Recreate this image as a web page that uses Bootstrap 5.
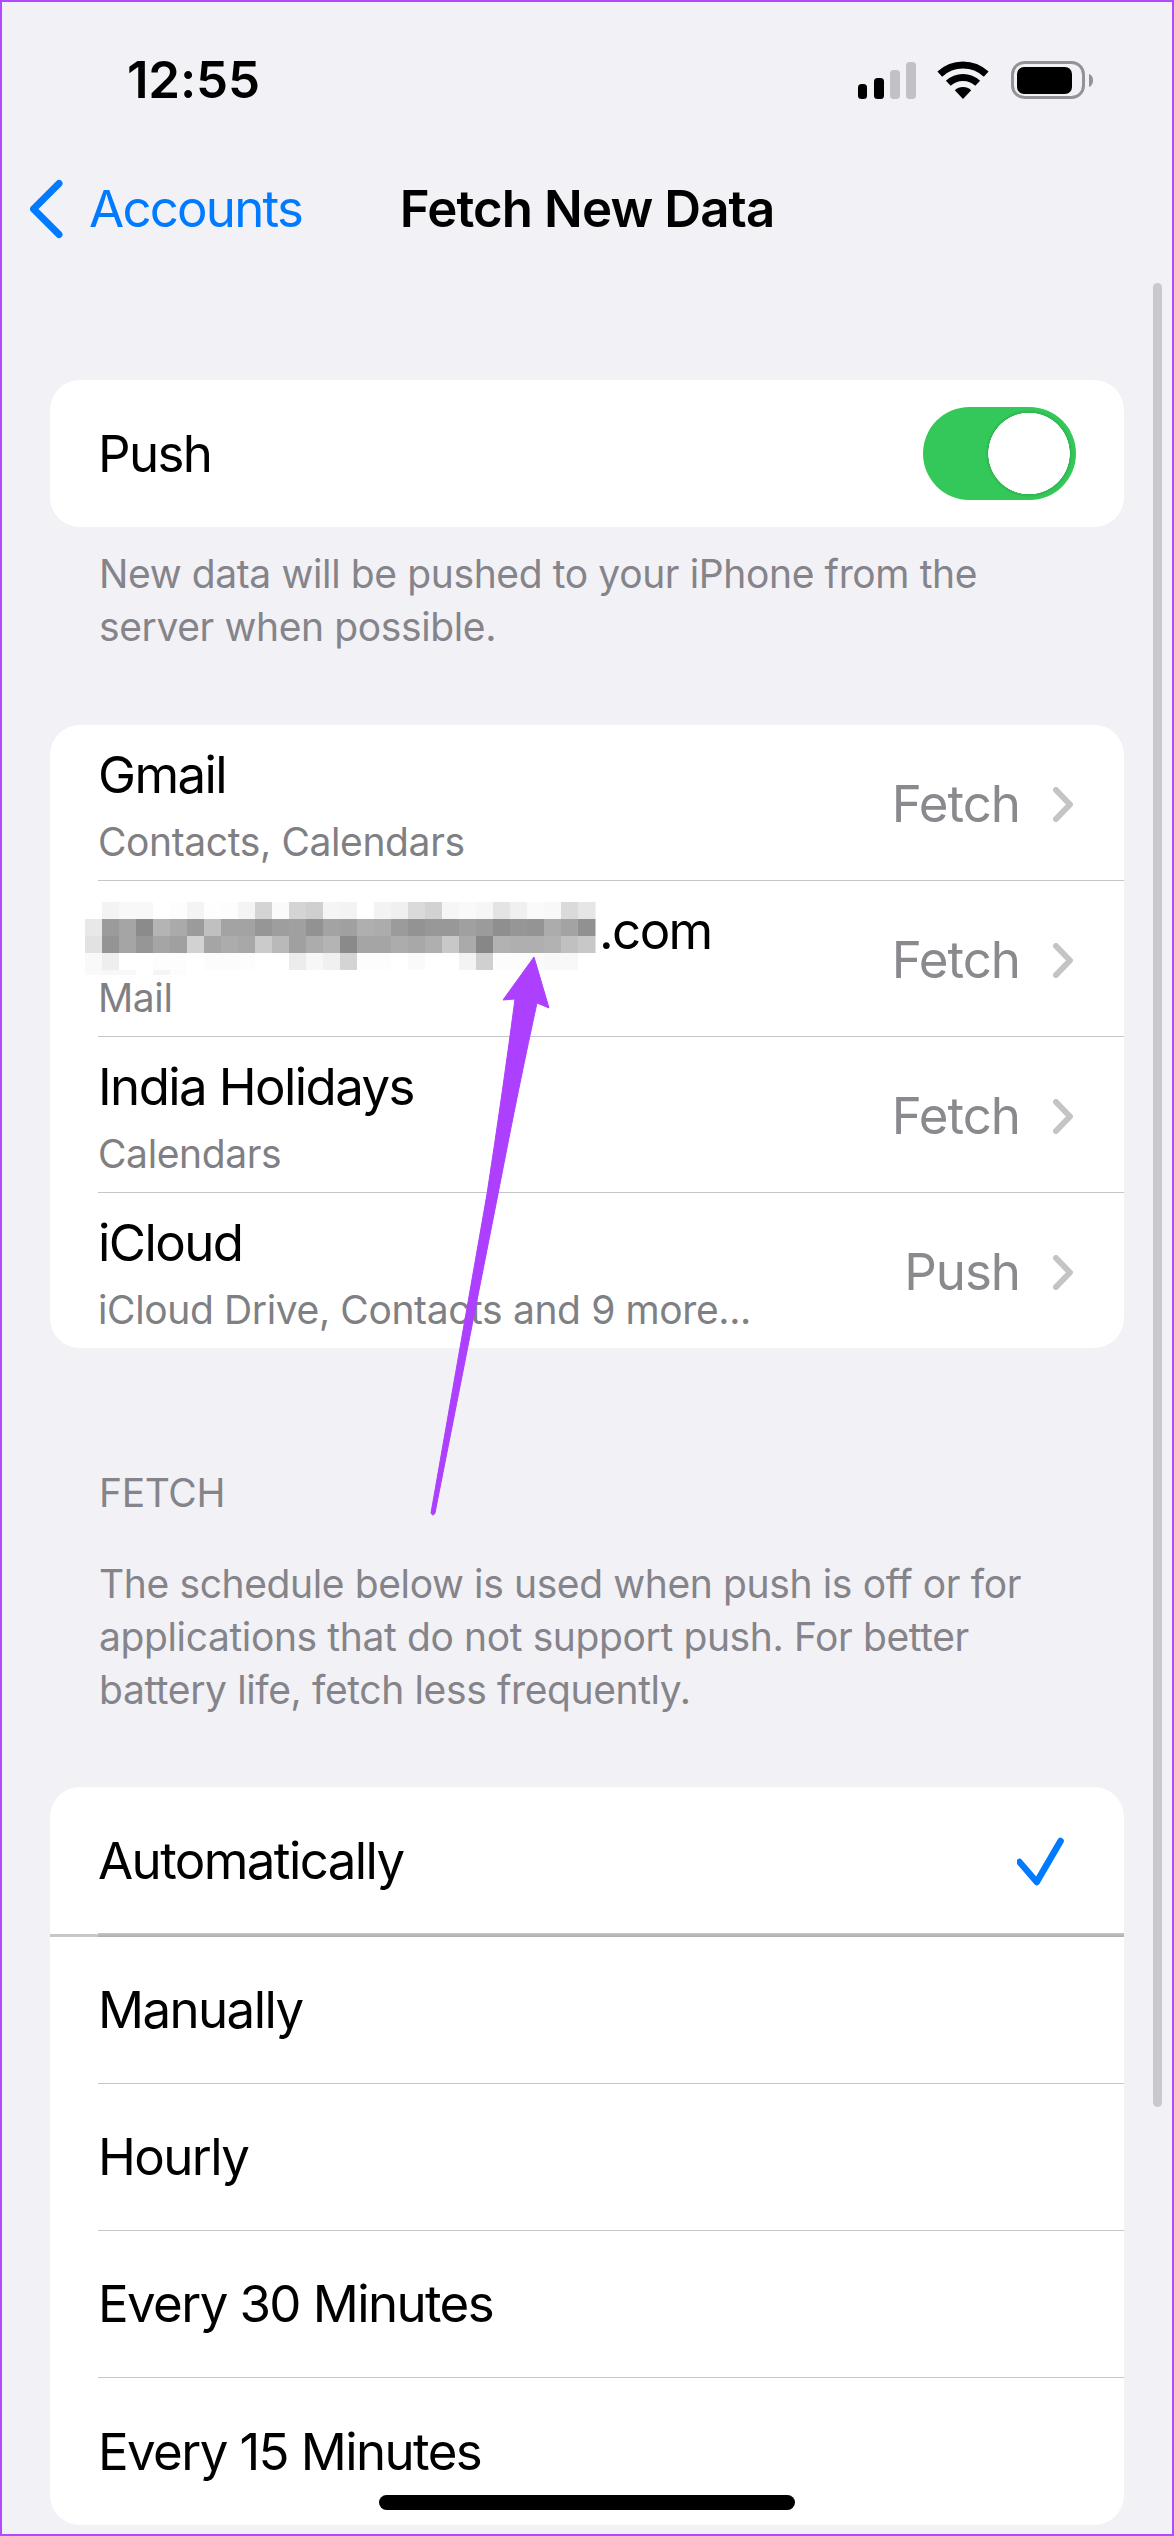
<!DOCTYPE html>
<html lang="en">
<head>
    <meta charset="UTF-8">
    <meta name="viewport" content="width=device-width, initial-scale=1.0">
    <title>Fetch New Data</title>
    <link href="https://cdn.jsdelivr.net/npm/bootstrap@5.3.0/dist/css/bootstrap.min.css" rel="stylesheet">
    <style>
        body {
            margin: 0;
            background: #f2f1f6;
            font-family: Inter, "Liberation Sans", sans-serif;
            color: #000;
        }

        .phone-frame {
            position: relative;
            height: 100vh;
            overflow: hidden;
            background: #f2f1f6;
            border: 2px solid #b04bff;
        }

        /* status bar */
        .status-strip {
            padding: 47px 79px 0 125px;
        }

        .clock-text {
            font-size: 51px;
            line-height: 62px;
            font-weight: 600;
            letter-spacing: -0.2px;
        }

        /* nav bar */
        .nav-strip {
            display: grid;
            grid-template-columns: 1fr auto 1fr;
            align-items: center;
            margin-top: 67px;
        }

        .back-link {
            gap: 25px;
            padding-left: 28px;
            color: #007aff;
            text-decoration: none;
            font-size: 51px;
            line-height: 62px;
            letter-spacing: -1.8px;
        }

        .nav-title {
            font-size: 51px;
            line-height: 62px;
            font-weight: 600;
            letter-spacing: -0.9px;
        }

        /* grouped lists */
        .ios-group {
            margin: 0 48px;
            border-radius: 30px;
            background: #fff;
        }

        .ios-item {
            position: relative;
            padding: 0;
            border: 0;
            background: transparent;
            color: #000;
        }

        .item-label {
            font-size: 51px;
            line-height: 62px;
            letter-spacing: -1.6px;
        }

        .push-group {
            margin-top: 140px;
        }

        .single-line {
            height: 147px;
            padding: 0 48px;
        }

        .form-switch .push-toggle.form-check-input,
        .form-switch .push-toggle.form-check-input:checked {
            --bs-form-switch-bg: radial-gradient(circle at 106px 46.5px, #fff 40.5px, #2fb650 41px, transparent 44px);
            width: 153px;
            height: 93px;
            margin: 0;
            float: none;
            border: 0;
            border-radius: 47px;
            background-color: #34c759;
        }

        .group-note {
            margin: 20px 48px 0 97px;
            font-size: 39px;
            line-height: 53px;
            letter-spacing: -0.38px;
            color: #85848a;
            white-space: nowrap;
        }

        .accounts-group {
            margin-top: 72px;
        }

        .account-item {
            margin-left: 48px;
            height: 156px;
            padding: 19px 51px 0 0;
            border-bottom: 1px solid #c6c6c8;
        }

        .ios-item:last-child .account-item {
            border-bottom: 0;
            height: 155px;
        }

        .account-sub {
            margin-top: 12px;
            font-size: 39px;
            line-height: 47px;
            letter-spacing: -0.38px;
            color: #808084;
        }

        .account-mode {
            gap: 33px;
            margin-top: -16px;
            color: #8a898e;
            font-size: 51px;
            line-height: 62px;
            letter-spacing: -1px;
        }

        .email-line {
            position: relative;
            padding-left: 501px;
        }

        .email-blur {
            position: absolute;
            left: -13px;
            top: 2px;
        }

        .fetch-heading {
            margin-top: 118px;
        }

        .fetch-note {
            margin-top: 38px;
        }

        .schedule-group {
            margin-top: 71px;
        }

        .schedule-item {
            margin-left: 48px;
            height: 147px;
            padding: 0 53px 0 0;
            border-bottom: 1px solid #c6c6c8;
        }

        .ios-item:last-child .schedule-item {
            border-bottom: 0;
            height: 147px;
        }

        .schedule-first {
            height: 150px;
            border-bottom: 3px solid #c8c8ca;
        }

        .schedule-first .schedule-item {
            height: 147px;
            border-bottom: 0;
        }

        .schedule-first::after {
            content: "";
            position: absolute;
            left: 48px;
            right: 0;
            bottom: -3px;
            height: 4px;
            background: linear-gradient(#c6c6c8, #adadaf);
        }

        /* things lying over the page */
        .side-scroller {
            position: absolute;
            left: 1151px;
            top: 281px;
            width: 9px;
            height: 1824px;
            border-radius: 5px;
            background: #c9c8ce;
        }

        .home-bar {
            position: absolute;
            left: 377px;
            top: 2493px;
            width: 416px;
            height: 15px;
            border-radius: 8px;
            background: #000;
        }

        .arrow-layer {
            position: absolute;
            left: -2px;
            top: -2px;
            pointer-events: none;
        }
    </style>
</head>
<body>
    <div class="phone-frame">

        <div class="status-strip d-flex justify-content-between align-items-center">
            <span class="clock-text">12:55</span>
            <svg width="235" height="38" viewBox="858 60 235 38">
                <rect x="858" y="83" width="9" height="15" rx="3.5" fill="#000"/>
                <rect x="874" y="77" width="10" height="21" rx="3.5" fill="#000"/>
                <rect x="890" y="69" width="10" height="29" rx="3.5" fill="#c1c1c6"/>
                <rect x="906" y="61" width="10" height="37" rx="3.5" fill="#c1c1c6"/>
                <path d="M939.8 73.1A34 34 0 0 1 986.2 73.1" fill="none" stroke="#000" stroke-width="7"/>
                <path d="M948.3 82.3A21.5 21.5 0 0 1 977.7 82.3" fill="none" stroke="#000" stroke-width="7"/>
                <path d="M963 98L954.8 89.2A12 12 0 0 1 971.2 89.2Z" fill="#000"/>
                <rect x="1012.5" y="61.5" width="71" height="35" rx="12" fill="none" stroke="#929297" stroke-width="3"/>
                <rect x="1017" y="66" width="55" height="27" rx="7" fill="#000"/>
                <path d="M1089 73C1092 74 1093 77 1093 79.5C1093 82 1092 85 1089 86Z" fill="#929297"/>
            </svg>
        </div>

        <div class="nav-strip">
            <a class="back-link d-flex align-items-center" href="#">
                <svg width="34" height="60" viewBox="0 0 34 60">
                    <path d="M29 4.5L3.5 30L29 55.5" fill="none" stroke="#007aff" stroke-width="7" stroke-linecap="round" stroke-linejoin="round"/>
                </svg>
                <span>Accounts</span>
            </a>
            <div class="nav-title">Fetch New Data</div>
        </div>

        <div class="ios-group push-group">
            <div class="single-line d-flex justify-content-between align-items-center">
                <span class="item-label">Push</span>
                <div class="form-check form-switch p-0 m-0">
                    <input class="form-check-input push-toggle d-block" type="checkbox" role="switch" checked>
                </div>
            </div>
        </div>
        <p class="group-note">New data will be pushed to your iPhone from the<br>server when possible.</p>

        <ul class="list-group ios-group accounts-group">
            <li class="list-group-item ios-item">
                <div class="account-item d-flex justify-content-between align-items-center">
                    <div class="align-self-start">
                        <div class="item-label">Gmail</div>
                        <div class="account-sub">Contacts, Calendars</div>
                    </div>
                    <div class="account-mode d-flex align-items-center">
                        <span>Fetch</span>
                        <svg width="20" height="35" viewBox="0 0 20 35"><path d="M3 3L17 17.5L3 32" fill="none" stroke="#c4c4c7" stroke-width="6" stroke-linecap="round" stroke-linejoin="round"/></svg>
                    </div>
                </div>
            </li>
            <li class="list-group-item ios-item">
                <div class="account-item d-flex justify-content-between align-items-center">
                    <div class="align-self-start">
                        <div class="item-label email-line">
                            <svg class="email-blur" id="emailBlur" width="515" height="73" viewBox="0 0 515 73"></svg>.com
                        </div>
                        <div class="account-sub">Mail</div>
                    </div>
                    <div class="account-mode d-flex align-items-center">
                        <span>Fetch</span>
                        <svg width="20" height="35" viewBox="0 0 20 35"><path d="M3 3L17 17.5L3 32" fill="none" stroke="#c4c4c7" stroke-width="6" stroke-linecap="round" stroke-linejoin="round"/></svg>
                    </div>
                </div>
            </li>
            <li class="list-group-item ios-item">
                <div class="account-item d-flex justify-content-between align-items-center">
                    <div class="align-self-start">
                        <div class="item-label">India Holidays</div>
                        <div class="account-sub">Calendars</div>
                    </div>
                    <div class="account-mode d-flex align-items-center">
                        <span>Fetch</span>
                        <svg width="20" height="35" viewBox="0 0 20 35"><path d="M3 3L17 17.5L3 32" fill="none" stroke="#c4c4c7" stroke-width="6" stroke-linecap="round" stroke-linejoin="round"/></svg>
                    </div>
                </div>
            </li>
            <li class="list-group-item ios-item">
                <div class="account-item d-flex justify-content-between align-items-center">
                    <div class="align-self-start">
                        <div class="item-label">iCloud</div>
                        <div class="account-sub">iCloud Drive, Contacts and 9 more...</div>
                    </div>
                    <div class="account-mode d-flex align-items-center">
                        <span>Push</span>
                        <svg width="20" height="35" viewBox="0 0 20 35"><path d="M3 3L17 17.5L3 32" fill="none" stroke="#c4c4c7" stroke-width="6" stroke-linecap="round" stroke-linejoin="round"/></svg>
                    </div>
                </div>
            </li>
        </ul>

        <p class="group-note fetch-heading mb-0">FETCH</p>
        <p class="group-note fetch-note mb-0">The schedule below is used when push is off or for<br>applications that do not support push. For better<br>battery life, fetch less frequently.</p>

        <ul class="list-group ios-group schedule-group">
            <li class="list-group-item ios-item schedule-first">
                <div class="schedule-item d-flex justify-content-between align-items-center">
                    <span class="item-label">Automatically</span>
                    <svg width="54" height="52" viewBox="0 0 54 52"><path d="M2.5 27L19.7 47L43.6 6" fill="none" stroke="#007aff" stroke-width="6.5" stroke-linecap="round" stroke-linejoin="round"/></svg>
                </div>
            </li>
            <li class="list-group-item ios-item"><div class="schedule-item d-flex align-items-center"><span class="item-label">Manually</span></div></li>
            <li class="list-group-item ios-item"><div class="schedule-item d-flex align-items-center"><span class="item-label">Hourly</span></div></li>
            <li class="list-group-item ios-item"><div class="schedule-item d-flex align-items-center"><span class="item-label">Every 30 Minutes</span></div></li>
            <li class="list-group-item ios-item"><div class="schedule-item d-flex align-items-center"><span class="item-label">Every 15 Minutes</span></div></li>
        </ul>

        <div class="side-scroller"></div>
        <div class="home-bar"></div>

        <svg class="arrow-layer" width="1174" height="2536" viewBox="0 0 1174 2536">
            <path d="M534 957L549 1008L537 1003Q520 1080 498 1194L435 1513Q433 1517 431 1513L487 1194Q503 1090 515 999L503 1000Z" fill="#ad3fff" stroke="#ad3fff" stroke-width="1" stroke-linejoin="round"/>
        </svg>
    </div>

    <script>
        // grises del pixelado del correo, 30 columnas de 17px
        const blurRows = [
            [255,243,248,248,255,253,244,254,253,244,212,250,212,207,245,243,255,243,240,218,210,246,249,246,228,240,250,248,218,230],
            [232,155,165,139,180,170,155,192,163,163,150,158,160,146,163,160,175,172,155,147,152,152,160,155,143,150,148,172,163,145],
            [226,148,165,150,165,160,210,165,172,168,203,185,160,172,180,138,165,165,172,168,175,200,170,135,178,175,175,178,192,200],
            [249,238,255,255,253,253,255,252,252,253,255,255,236,247,240,212,253,253,255,250,255,255,243,208,252,252,250,248,248,255],
            [250,248,248,255,245,252,255,255,255,255,255,255,255,255,255,255,255,255,255,255,255,255,255,255,255,255,255,255,255,255]
        ];
        const emailBlur = document.getElementById("emailBlur");
        let rects = "";
        blurRows.forEach(function (cells, rowIndex) {
            const cellHeight = rowIndex === 4 ? 5 : 17;
            cells.forEach(function (gray, colIndex) {
                rects += '<rect x="' + colIndex * 17 + '" y="' + rowIndex * 17 + '" width="17.5" height="' + cellHeight + '" fill="rgb(' + gray + ',' + gray + ',' + gray + ')"/>';
            });
        });
        emailBlur.innerHTML = rects;
    </script>
    <script src="https://cdn.jsdelivr.net/npm/bootstrap@5.3.0/dist/js/bootstrap.bundle.min.js"></script>
</body>
</html>
